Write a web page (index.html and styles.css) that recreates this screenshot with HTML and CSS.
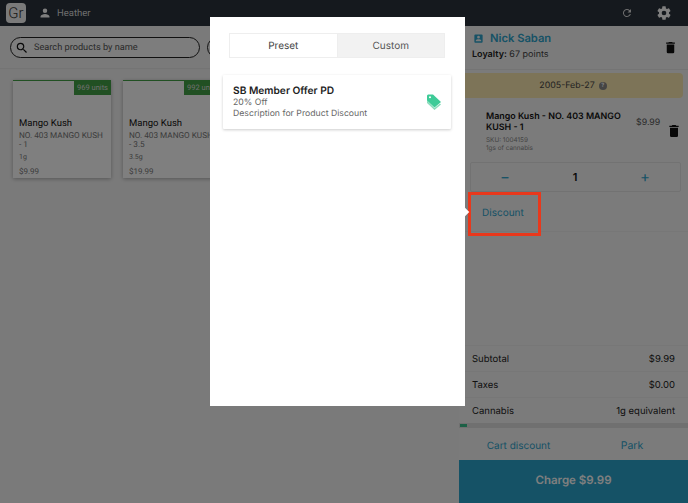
FILE: index.html
```html
<!DOCTYPE html>
<html lang="en">
<head>
<meta charset="utf-8">
<title>POS</title>
<link rel="stylesheet" href="styles.css">
</head>
<body>
<div class="app">
  <header class="topbar">
    <div class="logo">Gr</div>
    <svg class="user-icon" viewBox="0 0 24 24"><path d="M12 12a4.500 4.500 0 1 0 0-9 4.500 4.500 0 0 0 0 9zm0 2c-3.500 0-9 1.700-9 5v2h18v-2c0-3.300-5.500-5-9-5z"/></svg>
    <span class="user-name">Heather</span>
    <span class="spacer"></span>
    <svg class="refresh-icon" viewBox="0 0 24 24"><path d="M17.650 6.350A8 8 0 1 0 19.730 14h-2.080a6 6 0 1 1-1.410-6.240L13 11h7V4z"/></svg>
    <svg class="gear-icon" viewBox="0 0 24 24"><path d="M19.430 12.980a7.800 7.800 0 0 0 0-1.960l2.110-1.650a.5.5 0 0 0 .12-.64l-2-3.460a.5.5 0 0 0-.61-.22l-2.490 1a7.300 7.300 0 0 0-1.690-.98l-.38-2.650A.49.490 0 0 0 14 2h-4a.49.490 0 0 0-.49.420l-.38 2.650c-.61.250-1.170.590-1.690.98l-2.490-1a.49.490 0 0 0-.61.220l-2 3.460a.49.490 0 0 0 .12.640l2.110 1.650a7.900 7.900 0 0 0 0 1.960l-2.110 1.650a.5.5 0 0 0-.12.640l2 3.460c.12.220.39.300.61.220l2.490-1c.52.400 1.080.730 1.690.98l.38 2.650c.3.240.24.420.49.420h4c.25 0 .46-.18.490-.42l.38-2.650c.61-.25 1.170-.59 1.690-.98l2.490 1c.23.090.49 0 .61-.22l2-3.460a.5.5 0 0 0-.12-.64zM12 15.500a3.500 3.500 0 1 1 0-7 3.500 3.500 0 0 1 0 7z"/></svg>
  </header>
  <div class="main">
    <section class="catalog">
      <div class="search-row">
        <div class="search">
          <svg class="search-icon" viewBox="0 0 24 24"><path d="M15.500 14h-.79l-.28-.27A6.470 6.470 0 0 0 16 9.500 6.500 6.500 0 1 0 9.500 16c1.610 0 3.090-.59 4.230-1.570l.27.28v.79l5 4.990L20.490 19l-4.990-5zm-6 0C7.010 14 5 11.990 5 9.500S7.010 5 9.500 5 14 7.010 14 9.500 11.990 14 9.500 14z"/></svg>
          <span>Search products by name</span>
        </div>
        <div class="search-next"></div>
      </div>
      <div class="cards">
        <article class="card">
          <div class="stock"><span>969 units</span></div>
          <h3>Mango Kush</h3>
          <p class="desc">NO. 403 MANGO KUSH - 1</p>
          <p class="size">1g</p>
          <p class="price">$9.99</p>
        </article>
        <article class="card">
          <div class="stock"><span>992 units</span></div>
          <h3>Mango Kush</h3>
          <p class="desc">NO. 403 MANGO KUSH - 3.5</p>
          <p class="size">3.5g</p>
          <p class="price">$19.99</p>
        </article>
      </div>
    </section>
    <aside class="cart">
      <div class="customer">
        <div class="customer-info">
          <div class="customer-name">
            <svg class="badge-icon" viewBox="0 0 24 24"><path d="M19 3H5a2 2 0 0 0-2 2v14a2 2 0 0 0 2 2h14a2 2 0 0 0 2-2V5a2 2 0 0 0-2-2zm-7 3a3 3 0 1 1 0 6 3 3 0 0 1 0-6zm6 12H6v-1c0-2 4-3.100 6-3.100s6 1.100 6 3.100z"/></svg>
            <span>Nick Saban</span>
          </div>
          <div class="loyalty"><b>Loyalty:</b> 67 points</div>
        </div>
        <svg class="trash small" viewBox="0 0 24 24"><path d="M6 19a2 2 0 0 0 2 2h8a2 2 0 0 0 2-2V7H6zM19 4h-3.500l-1-1h-5l-1 1H5v2h14z"/></svg>
      </div>
      <div class="dob"><span>2005-Feb-27</span><i class="help">?</i></div>
      <div class="line-item">
        <div class="line-text">
          <div class="line-name">Mango Kush - NO. 403 MANGO KUSH - 1</div>
          <div class="line-sub">SKU: 1004159<br>1gs of cannabis</div>
        </div>
        <div class="line-price">$9.99</div>
        <svg class="trash large" viewBox="0 0 24 24"><path d="M6 19a2 2 0 0 0 2 2h8a2 2 0 0 0 2-2V7H6zM19 4h-3.500l-1-1h-5l-1 1H5v2h14z"/></svg>
      </div>
      <div class="qty"><span class="qty-btn">−</span><b>1</b><span class="qty-btn">+</span></div>
      <div class="discount-row"><span>Discount</span></div>
      <div class="cart-space"></div>
      <div class="totals">
        <div class="total-row"><span>Subtotal</span><span>$9.99</span></div>
        <div class="total-row"><span>Taxes</span><span>$0.00</span></div>
        <div class="total-row"><span>Cannabis</span><span>1g equivalent</span></div>
      </div>
      <div class="progress"><div class="progress-fill"></div></div>
      <div class="cart-actions"><span>Cart discount</span><span>Park</span></div>
      <div class="charge">Charge $9.99</div>
    </aside>
  </div>
</div>
<div class="scrim"></div>
<div class="highlight"></div>
<div class="pointer"></div>
<div class="modal">
  <div class="tabs">
    <div class="tab active">Preset</div>
    <div class="tab">Custom</div>
  </div>
  <div class="offer">
    <div class="offer-text">
      <div class="offer-title">SB Member Offer PD</div>
      <div class="offer-line">20% Off</div>
      <div class="offer-line">Description for Product Discount</div>
    </div>
    <svg class="tag-icon" viewBox="0 0 14 16"><path class="tag-back" d="M0 6.500v2.500l7.500 7 6.500-5.500-1-1-5.500 4.500z"/><path class="tag-front" d="M0 1.500 1 .5h5l8 7.500-6.500 5.500L0 6.500zM3 2.200a1 1 0 1 0 0 2 1 1 0 0 0 0-2z"/></svg>
  </div>
</div>
</body>
</html>
```
FILE: styles.css
```css
* { box-sizing: border-box; }
html, body { margin: 0; height: 503px; overflow: hidden; }
body { font-family: Inter, "Liberation Sans", sans-serif; position: relative; background: #fff; color: #111; text-rendering: geometricPrecision; }
p, h3 { margin: 0; }
.app { width: 688px; height: 503px; display: flex; flex-direction: column; }
.topbar { height: 26px; flex: none; display: flex; align-items: center; background: #2a323c; padding: 0 16px 0 6px; }
.logo { width: 20px; height: 20px; border-radius: 4px; background: #f4f4f4; color: #333; font: 300 15px/20px Roboto, sans-serif; text-align: center; }
.user-icon { width: 12px; height: 12px; fill: #fff; margin-left: 13px; }
.user-name { font: 9.500px Roboto, sans-serif; color: #ddd; margin-left: 6px; }
.spacer { flex: 1; }
.refresh-icon { width: 12px; height: 12px; fill: #ddd; margin-right: 23px; }
.gear-icon { width: 16px; height: 16px; fill: #fff; }
.main { flex: 1; display: flex; min-height: 0; }
.catalog { width: 459px; flex: none; background: #f5f5f5; }
.search-row { display: flex; align-items: center; gap: 7px; height: 42px; padding: 1px 0 0 10px; overflow: hidden; box-shadow: 0 1px 1px rgba(0,0,0,.05); }
.search { width: 190px; height: 21px; flex: none; border: 1px solid #222; border-radius: 11px; display: flex; align-items: center; padding-left: 4px; font: 9.200px Roboto, sans-serif; color: #555; background: #fafafa; }
.search span { margin-left: 5px; }
.search-icon { width: 14px; height: 14px; fill: #111; }
.search-next { width: 30px; height: 21px; flex: none; border: 1px solid #222; border-radius: 11px; }
.cards { display: flex; gap: 12px; padding: 12px 0 0 13px; }
.card { width: 98px; height: 98px; flex: none; background: #fff; border-top: 1px solid #43a047; box-shadow: 0 1px 4px rgba(0,0,0,.3); padding: 0 6px; position: relative; font-family: Roboto, sans-serif; }
.stock { height: 14px; margin: 0 -6px 22px; display: flex; justify-content: flex-end; }
.stock span { width: 37px; background: #43a047; color: #ddd; font-size: 7.500px; line-height: 14px; text-align: center; }
.card h3 { font-size: 9.500px; font-weight: 400; line-height: 13px; color: #111; }
.desc { font-size: 8.200px; line-height: 9px; color: #777; margin-top: 2px; }
.size { font-size: 7px; color: #777; line-height: 9px; margin-top: 3px; }
.price { font-size: 8px; line-height: 10px; color: #777; margin-top: 5px; }
.cart { width: 229px; flex: none; background: #f7f7f7; display: flex; flex-direction: column; font-family: Inter, sans-serif; }
.customer { height: 44px; flex: none; padding: 4px 10px 0 13px; display: flex; justify-content: space-between; align-items: flex-start; border-bottom: 1px solid #e8e8e8; }
.customer-name { display: flex; align-items: center; gap: 6px; font-size: 11.200px; font-weight: 600; color: #2ea4cc; line-height: 16px; margin-left: 1px; }
.badge-icon { width: 11px; height: 11px; fill: #2ea4cc; }
.loyalty { font-size: 9px; color: #444; line-height: 12px; margin-top: 3px; }
.loyalty b { font-weight: 600; color: #222; }
.trash { fill: #111; flex: none; }
.trash.small { width: 15px; height: 15px; margin-top: 10px; }
.trash.large { width: 16px; height: 16px; margin: 12px 0 0 1px; }
.dob { height: 25px; flex: none; margin: 3px 5px 0 0; background: #fbe8b0; border-radius: 0 4px 4px 0; display: flex; justify-content: center; align-items: center; gap: 4px; font-size: 8.800px; color: #444; padding-left: 4px; }
.help { width: 8px; height: 8px; border-radius: 50%; background: #888; color: #fff; font: 700 6px/8px Roboto, sans-serif; text-align: center; }
.line-item { height: 55px; flex: none; display: flex; padding: 13px 6px 0 27px; }
.line-text { width: 141px; flex: none; }
.line-name { font-size: 8.900px; font-weight: 600; line-height: 11px; color: #111; }
.line-sub { font-size: 6.400px; line-height: 8px; color: #888; margin-top: 3px; }
.line-price { font-size: 8.800px; color: #555; width: 29px; margin-left: 9px; margin-top: 6px; }
.qty { height: 30px; flex: none; margin: 9px 7px 0 11px; border: 1px solid #e5e5e5; border-radius: 2px; display: flex; align-items: center; justify-content: space-between; padding: 0 25px 1px 24px; font-size: 11px; }
.qty b { font-weight: 600; }
.qty-btn { color: #2ea4cc; font-size: 15px; width: 20px; text-align: center; }
.discount-row { height: 40px; flex: none; display: flex; align-items: center; padding: 2px 0 0 23px; border-bottom: 1px solid #eee; font-size: 10px; color: #2ea4cc; }
.cart-space { flex: 1; }
.totals { flex: none; }
.total-row { height: 26px; padding: 2px 13px 0; display: flex; justify-content: space-between; align-items: center; border-top: 1px solid #eee; font-size: 9.500px; color: #222; }
.progress { height: 5px; background: #e0e0e0; flex: none; padding: 1px 0; }
.progress-fill { width: 7px; height: 3px; margin-left: 1px; background: #39c08c; }
.cart-actions { height: 32px; flex: none; display: flex; font-size: 10px; color: #2ea4cc; align-items: center; padding-top: 3px; }
.cart-actions span { text-align: center; width: 119px; }
.cart-actions span + span { font-size: 10.500px; width: 108px; }
.charge { height: 43px; flex: none; background: #2aa4cc; color: #fff; font-size: 11.500px; font-weight: 600; text-align: center; line-height: 40px; }
.scrim { position: absolute; inset: 0; background: rgba(0,0,0,.5); }
.highlight { position: absolute; left: 468px; top: 192px; width: 73px; height: 44px; border: 3px solid #e8381c; }
.pointer { position: absolute; left: 462px; top: 209px; width: 6px; height: 6px; transform: rotate(45deg); background: #fff; }
.modal { position: absolute; left: 210px; top: 17px; width: 255px; height: 389px; background: #fff; padding: 16px 14px 0 13px; }
.tabs { display: flex; margin: 0 6px 0 6px; height: 25px; border: 1px solid #eee; }
.tab { flex: 1; text-align: center; font-size: 10px; line-height: 25px; color: #555; background: #f2f2f2; }
.tab.active { background: #fff; border-right: 1px solid #eee; color: #444; }
.offer { margin-top: 17px; height: 54px; display: flex; justify-content: space-between; align-items: center; padding: 0 10px 0 10px; box-shadow: 0 1px 3px rgba(0,0,0,.2); border-radius: 1px; }
.offer-text { padding-top: 1px; }
.offer-title { font-size: 10.200px; font-weight: 600; color: #222; line-height: 13px; }
.offer-line { font-size: 8.700px; color: #666; line-height: 11px; }
.tag-icon { width: 14px; height: 16px; }
.tag-back { fill: #8adcbc; }
.tag-front { fill: #3ecb98; }
```
